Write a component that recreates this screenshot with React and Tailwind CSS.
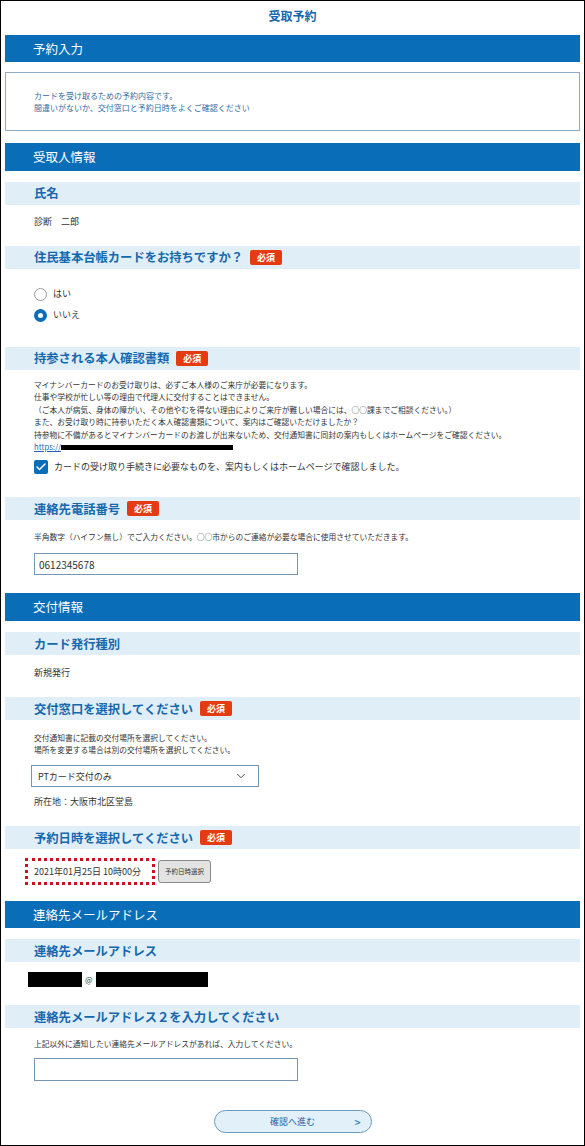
import React from 'react';
import { Check, ChevronDown } from 'lucide-react';

// 受取予約フォーム（入力画面）

const SectionBar = ({ children, className = '' }) => (
    <div className={`h-[27px] bg-[#0a6db8] text-white text-[12.5px] leading-[27px] pl-[28px] ${className}`}>
        {children}
    </div>
);

const Required = () => (
    <span className="ml-[7px] inline-flex items-center justify-center h-[15px] w-[32px] rounded-[2px] bg-[#e53b12] text-white text-[9px] font-bold">
        必須
    </span>
);

const FieldHead = ({ children, required, className = '' }) => (
    <div className={`h-[23px] bg-[#e0eef8] flex items-center pl-[29px] text-[12.3px] font-bold text-[#1568ad] ${className}`}>
        <span>{children}</span>
        {required && <Required />}
    </div>
);

const Radio = ({ checked, label, className = '' }) => (
    <label className={`flex items-center h-[16px] ${className}`}>
        {checked ? (
            <span className="w-[13px] h-[13px] rounded-full bg-[#0a6db8] flex items-center justify-center">
                <span className="w-[5px] h-[5px] rounded-full bg-white" />
            </span>
        ) : (
            <span className="w-[13px] h-[13px] rounded-full border border-[#9a9a9a] bg-white" />
        )}
        <span className="ml-[6px] text-[9px] text-[#333]">{label}</span>
    </label>
);

const notes = [
    'マイナンバーカードのお受け取りは、必ずご本人様のご来庁が必要になります。',
    '仕事や学校が忙しい等の理由で代理人に交付することはできません。',
    '（ご本人が病気、身体の障がい、その他やむを得ない理由によりご来庁が難しい場合には、○○課までご相談ください。）',
    'また、お受け取り時に持参いただく本人確認書類について、案内はご確認いただけましたか？',
    '持参物に不備があるとマイナンバーカードのお渡しが出来ないため、交付通知書に同封の案内もしくはホームページをご確認ください。',
];

export default function App() {
    return (
        <div className="w-[585px] h-[1146px] border border-black bg-white px-[4px] font-['Noto_Sans_CJK_JP','Noto_Sans',sans-serif] text-[#333]">
            {/* タイトル */}
            <div className="h-[34px] pt-[8px] text-center text-[12px] leading-[14px] font-bold text-[#1568ad]">受取予約</div>

            <SectionBar>予約入力</SectionBar>
            <div className="mt-[10px] h-[59px] border border-[#8fabc3] pl-[28px] pt-[17px] text-[8px] leading-[12px] text-[#2f6ea6]">
                <p>カードを受け取るための予約内容です。</p>
                <p>間違いがないか、交付窓口と予約日時をよくご確認ください</p>
            </div>

            {/* 受取人情報 */}
            <SectionBar className="mt-[12px] h-[28px] leading-[28px]">受取人情報</SectionBar>
            <FieldHead className="mt-[11px]">氏名</FieldHead>
            <div className="mt-[10px] pl-[29px] text-[9px] leading-[14px]">診断　二郎</div>

            <FieldHead className="mt-[17px]" required>住民基本台帳カードをお持ちですか？</FieldHead>
            <div className="pl-[29px]">
                <Radio className="mt-[17px]" label="はい" />
                <Radio className="mt-[5px]" checked label="いいえ" />
            </div>

            <FieldHead className="mt-[24px]" required>持参される本人確認書類</FieldHead>
            <div className="mt-[9px] pl-[29px] text-[7.75px] leading-[12.4px]">
                {notes.map((n, i) => (
                    <p key={i}>{n}</p>
                ))}
                <p className="flex items-center">
                    <span className="text-[#2b5fb0] underline">https://</span>
                    <span className="inline-block w-[172px] h-[5px] bg-black" />
                </p>
                <label className="mt-[6px] flex items-center h-[16px]">
                    <span className="w-[14px] h-[14px] rounded-[2px] bg-[#0a6db8] flex items-center justify-center">
                        <Check size={12} strokeWidth={3} color="#fff" />
                    </span>
                    <span className="ml-[6px] text-[9px]">カードの受け取り手続きに必要なものを、案内もしくはホームページで確認しました。</span>
                </label>
            </div>

            <FieldHead className="mt-[22px]" required>連絡先電話番号</FieldHead>
            <div className="pl-[29px]">
                <p className="mt-[11px] text-[7.75px] leading-[12px]">
                    半角数字（ハイフン無し）でご入力ください。○○市からのご連絡が必要な場合に使用させていただきます。
                </p>
                <div className="mt-[10px] w-[264px] h-[22px] border border-[#7696b3] flex items-center pl-[4px] text-[10px]">
                    0612345678
                </div>
            </div>

            {/* 交付情報 */}
            <SectionBar className="mt-[18px] h-[28px] leading-[28px]">交付情報</SectionBar>
            <FieldHead className="mt-[11px]">カード発行種別</FieldHead>
            <div className="mt-[11px] pl-[29px] text-[9px] leading-[14px]">新規発行</div>

            <FieldHead className="mt-[17px]" required>交付窓口を選択してください</FieldHead>
            <div className="pl-[29px]">
                <div className="mt-[12px] text-[7.75px] leading-[12px]">
                    <p>交付通知書に記載の交付場所を選択してください。</p>
                    <p>場所を変更する場合は別の交付場所を選択してください。</p>
                </div>
                <div className="mt-[9px] -ml-[3px] w-[228px] h-[22px] border border-[#7696b3] flex items-center justify-between pl-[6px] pr-[10px] text-[9px]">
                    <span>PTカード交付のみ</span>
                    <ChevronDown size={14} strokeWidth={1.5} color="#333" />
                </div>
                <p className="mt-[8px] text-[9px] leading-[14px]">所在地：大阪市北区堂島</p>
            </div>

            <FieldHead className="mt-[17px]" required>予約日時を選択してください</FieldHead>
            <div className="mt-[9px] pl-[20px] flex items-center">
                <div className="h-[27px] w-[130px] border-[3px] border-dotted border-[#d0101a] flex items-center pl-[6px] text-[9px]">
                    2021年01月25日 10時00分
                </div>
                <button className="ml-[3px] h-[23px] px-[6px] rounded-[3px] border border-[#8a8a8a] bg-[#e3e3e3] text-[6.5px] text-[#333]">
                    予約日時選択
                </button>
            </div>

            {/* 連絡先メールアドレス */}
            <SectionBar className="mt-[16px]">連絡先メールアドレス</SectionBar>
            <FieldHead className="mt-[11px]">連絡先メールアドレス</FieldHead>
            <div className="mt-[10px] pl-[23px] flex items-center h-[15px]">
                <span className="w-[54px] h-[15px] bg-black" />
                <span className="mx-[3px] text-[8px]">@</span>
                <span className="w-[112px] h-[15px] bg-black" />
            </div>

            <FieldHead className="mt-[18px]">連絡先メールアドレス２を入力してください</FieldHead>
            <div className="pl-[29px]">
                <p className="mt-[10px] text-[7.75px] leading-[12px]">上記以外に通知したい連絡先メールアドレスがあれば、入力してください。</p>
                <div className="mt-[8px] w-[264px] h-[23px] border border-[#7696b3]" />
            </div>

            <div className="mt-[29px] flex justify-center">
                <button className="relative w-[158px] h-[23px] rounded-full border border-[#6b9cc1] bg-[#e2f0f9] text-[9px] text-[#1568ad]">
                    確認へ進む
                    <span className="absolute right-[10px] top-1/2 -translate-y-1/2 text-[11px]">&gt;</span>
                </button>
            </div>
        </div>
    );
}
